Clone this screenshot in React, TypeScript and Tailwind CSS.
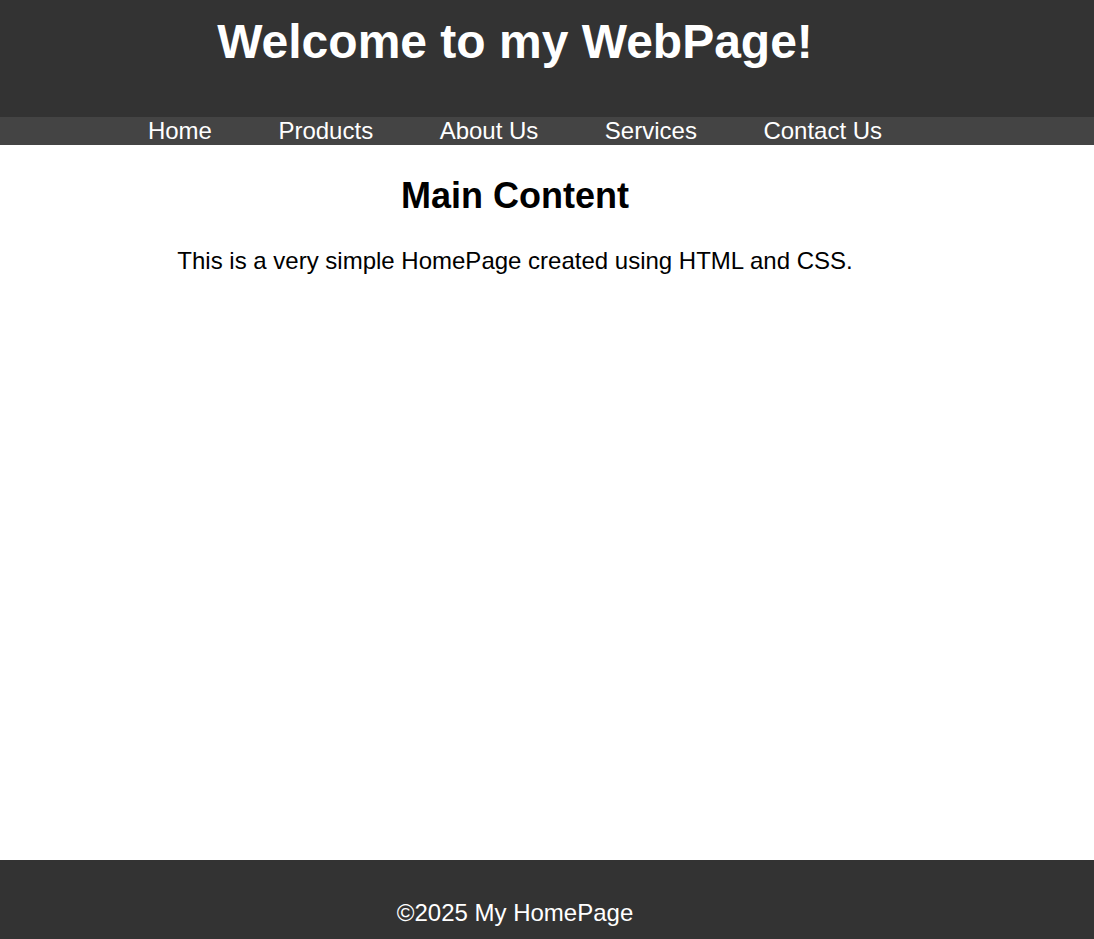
const NAV_LINKS = ["Home", "Products", "About Us", "Services", "Contact Us"];

export default function App() {
  return (
    <div className="flex min-h-screen flex-col bg-white font-['Liberation_Sans',Arial,sans-serif] text-[24px] text-black">
      <header className="bg-[#333333] text-white">
        <div className="w-[1030px] pt-[14px] pb-[48px] text-center">
          <h1 className="text-[48px] font-bold leading-[55px]">Welcome to my WebPage!</h1>
        </div>
      </header>

      <nav className="h-[28px] bg-[#444444] text-white">
        <ul className="flex w-[1030px] justify-center gap-[66.5px] leading-[28px]">
          {NAV_LINKS.map((link) => (
            <li key={link}>
              <a href="#">{link}</a>
            </li>
          ))}
        </ul>
      </nav>

      <main className="flex-1">
        <div className="w-[1030px] pt-[30px] text-center">
          <h2 className="text-[36px] font-bold leading-[41px]">Main Content</h2>
          <p className="mt-[31px] leading-[28px]">
            This is a very simple HomePage created using HTML and CSS.
          </p>
        </div>
      </main>

      <footer className="h-[79px] bg-[#333333] text-white">
        <div className="w-[1030px] pt-[39px] text-center">
          <p className="leading-[28px]">©2025 My HomePage</p>
        </div>
      </footer>
    </div>
  );
}
